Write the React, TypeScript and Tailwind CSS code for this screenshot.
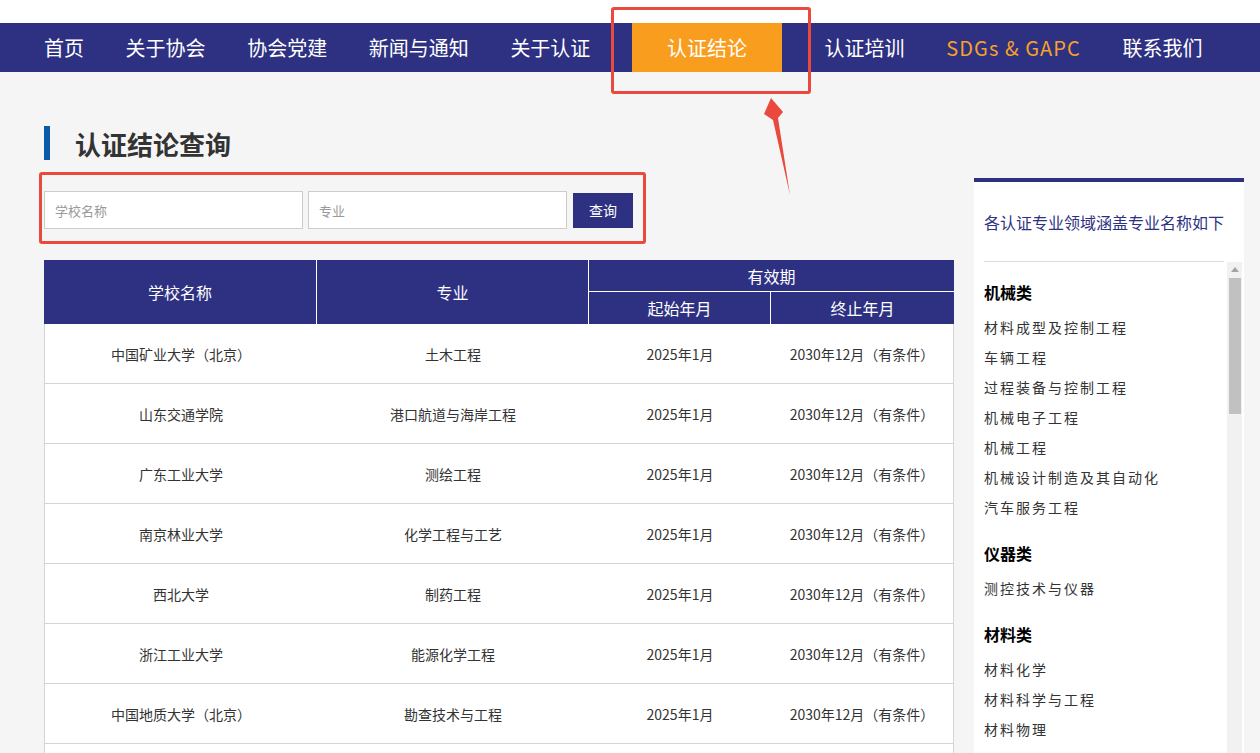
import React from 'react';

const navItems = ['首页', '关于协会', '协会党建', '新闻与通知', '关于认证', '认证结论', '认证培训', 'SDGs & GAPC', '联系我们'];

const rows = [
  ['中国矿业大学（北京）', '土木工程'],
  ['山东交通学院', '港口航道与海岸工程'],
  ['广东工业大学', '测绘工程'],
  ['南京林业大学', '化学工程与工艺'],
  ['西北大学', '制药工程'],
  ['浙江工业大学', '能源化学工程'],
  ['中国地质大学（北京）', '勘查技术与工程'],
  ['中国石油大学（华东）', '石油工程'],
];

const categories = [
  {
    name: '机械类',
    items: ['材料成型及控制工程', '车辆工程', '过程装备与控制工程', '机械电子工程', '机械工程', '机械设计制造及其自动化', '汽车服务工程'],
  },
  { name: '仪器类', items: ['测控技术与仪器'] },
  { name: '材料类', items: ['材料化学', '材料科学与工程', '材料物理', '冶金工程'] },
];

function NavBar() {
  return (
    <nav className="h-[49px] bg-[#2e3182] flex items-stretch pl-[44px] gap-[41.6px] text-[20px] text-white">
      {navItems.map((item) => {
        if (item === '认证结论') {
          return (
            <a key={item} className="flex items-center px-[35px] bg-[#f89d1e] mr-[1px]">
              {item}
            </a>
          );
        }
        return (
          <a key={item} className={'flex items-center ' + (item === 'SDGs & GAPC' ? 'text-[#f7a02a] tracking-[1.1px]' : '')}>
            {item}
          </a>
        );
      })}
    </nav>
  );
}

function ResultTable() {
  return (
    <div className="w-[910px]">
      <div className="grid grid-cols-[273px_272px_182px_183px] grid-rows-[32px_32px] bg-[#2e3182] text-white text-base">
        <div className="row-span-2 flex items-center justify-center border-r border-white">学校名称</div>
        <div className="row-span-2 flex items-center justify-center border-r border-white">专业</div>
        <div className="col-span-2 flex items-center justify-center border-b border-white">有效期</div>
        <div className="flex items-center justify-center border-r border-white">起始年月</div>
        <div className="flex items-center justify-center">终止年月</div>
      </div>
      <div className="bg-white border-x border-[#d4d4d4] text-sm text-[#333]">
        {rows.map(([school, major]) => (
          <div
            key={school + major}
            className="grid grid-cols-[272px_272px_182px_182px] h-[60px] items-center text-center border-b border-[#d4d4d4]"
          >
            <div>{school}</div>
            <div>{major}</div>
            <div>2025年1月</div>
            <div>2030年12月（有条件）</div>
          </div>
        ))}
      </div>
    </div>
  );
}

function Sidebar() {
  return (
    <aside className="mt-[106px] w-[270px] h-[620px] bg-white border-t-4 border-[#2e3182] pl-[10px] pr-[2px] flex flex-col">
      <div className="h-[80px] mr-[18px] flex items-center text-base text-[#2e3182] border-b border-[#dcdcdc]">
        各认证专业领域涵盖专业名称如下
      </div>
      <div className="flex flex-1 min-h-0">
        <div className="flex-1 pt-[15px] overflow-hidden">
          {categories.map((cat, i) => (
            <div key={cat.name} className={i > 0 ? 'mt-[16px]' : ''}>
              <div className="leading-[30px] mb-[5px] text-base font-bold text-black">{cat.name}</div>
              {cat.items.map((it) => (
                <div key={it} className="leading-[30px] text-sm tracking-[2px] text-[#333]">
                  {it}
                </div>
              ))}
            </div>
          ))}
        </div>
        {/* fake classic scrollbar */}
        <div className="w-[15px] bg-[#f1f1f1] flex flex-col items-center pt-[5px]">
          <div className="w-0 h-0 border-x-[4px] border-x-transparent border-b-[5px] border-b-[#a3a3a3]" />
          <div className="mt-[6px] w-[12px] h-[136px] bg-[#c1c1c1]" />
        </div>
      </div>
    </aside>
  );
}

export default function App() {
  return (
    <div className="relative h-screen overflow-hidden bg-[#f5f5f5] font-['Noto_Sans_CJK_SC',sans-serif]">
      <div className="h-[23px] bg-white" />
      <NavBar />
      <div className="flex pl-[44px] gap-[20px]">
        <main className="pt-[54px]">
          <div className="flex items-center h-[34px]">
            <div className="w-[6px] h-[34px] bg-[#0a5aa8]" />
            <h1 className="ml-[25px] text-[26px] font-bold text-[#333]">认证结论查询</h1>
          </div>
          <div className="flex items-center mt-[31px] h-[38px]">
            <input
              className="w-[259px] h-[38px] bg-white border border-[#cccccc] px-[10px] text-[13px] outline-none placeholder:text-[#999]"
              placeholder="学校名称"
            />
            <input
              className="ml-[5px] w-[259px] h-[38px] bg-white border border-[#cccccc] px-[10px] text-[13px] outline-none placeholder:text-[#999]"
              placeholder="专业"
            />
            <button className="ml-[6px] w-[60px] h-[35px] bg-[#2e3182] text-white text-sm">查询</button>
          </div>
          <div className="mt-[31px]">
            <ResultTable />
          </div>
        </main>
        <Sidebar />
      </div>

      {/* red annotation marks */}
      <div className="pointer-events-none absolute left-[611px] top-[7px] w-[200px] h-[87px] border-[3px] border-[#ea4a3e] rounded-[3px]" />
      <div className="pointer-events-none absolute left-[39px] top-[172px] w-[607px] h-[72px] border-[3px] border-[#ea4a3e] rounded-[3px]" />
      <svg className="pointer-events-none absolute left-0 top-0" width="1260" height="753">
        <polygon points="771,98 783,112 778,118 790,195 773,120 764,114" fill="#ea4a3e" />
      </svg>
    </div>
  );
}
